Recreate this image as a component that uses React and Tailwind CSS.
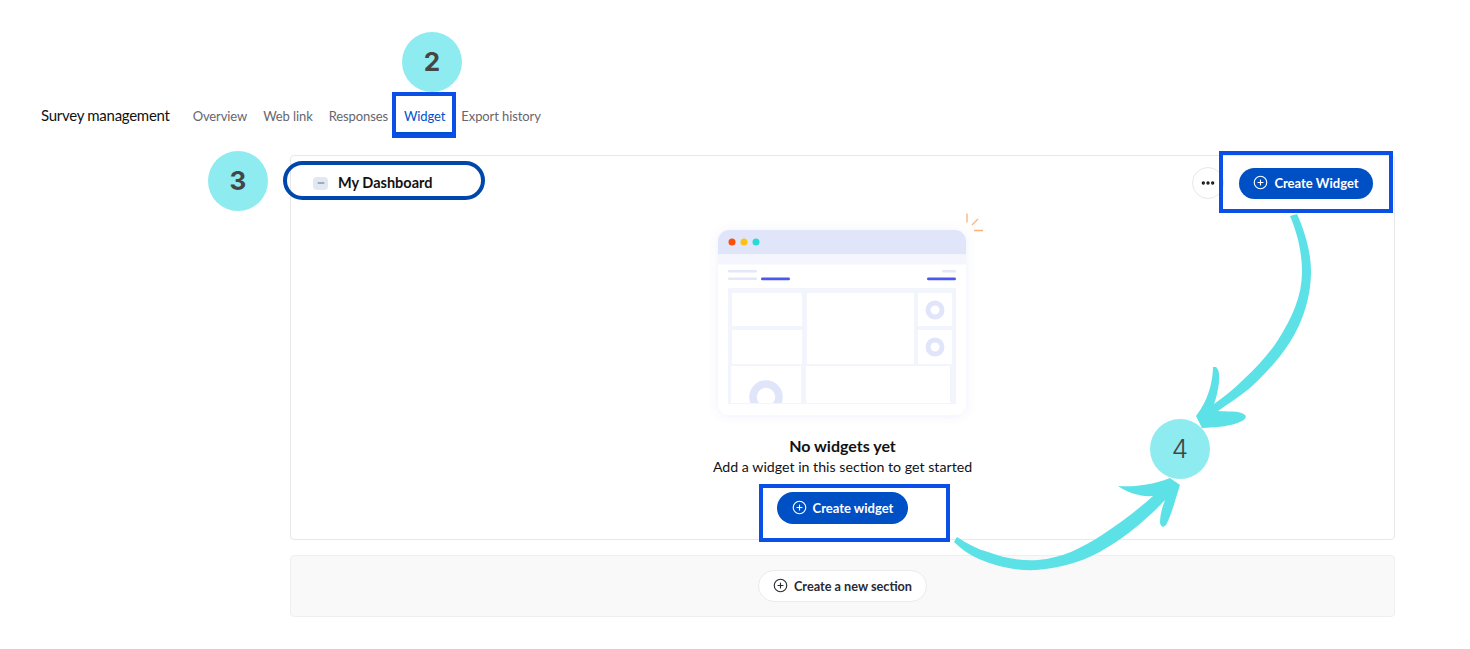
import React from "react";
import { CirclePlus, Ellipsis, Minus } from "lucide-react";

const tabs = ["Overview", "Web link", "Responses", "Widget", "Export history"];

function Illustration() {
  return (
    <svg width="310" height="230" viewBox="690 200 310 230" className="block">
      <defs>
        <filter id="sh" x="-20%" y="-20%" width="140%" height="140%">
          <feDropShadow dx="0" dy="1" stdDeviation="5" floodColor="#5b68d8" floodOpacity="0.1" />
        </filter>
        <clipPath id="win"><rect x="718" y="230" width="248" height="185" rx="11" /></clipPath>
      </defs>
      <rect x="718" y="230" width="248" height="185" rx="11" fill="#fff" filter="url(#sh)" />
      <g clipPath="url(#win)">
        <rect x="718" y="230" width="248" height="24.5" fill="#e0e5fa" />
        <rect x="718" y="254.5" width="248" height="10" fill="#f4f5fd" />
      </g>
      <circle cx="732" cy="242" r="3.5" fill="#fb4f0b" />
      <circle cx="744" cy="242" r="3.5" fill="#fec013" />
      <circle cx="756" cy="242" r="3.5" fill="#27dcd2" />
      <rect x="728" y="270" width="29" height="2.6" rx="1.3" fill="#e3e7fa" />
      <rect x="728" y="277.5" width="29" height="2.6" rx="1.3" fill="#e3e7fa" />
      <rect x="761" y="277.5" width="29" height="2.8" rx="1.4" fill="#4b57ef" />
      <rect x="942" y="270" width="14" height="2.6" rx="1.3" fill="#e3e7fa" />
      <rect x="927" y="277.5" width="29" height="2.8" rx="1.4" fill="#4b57ef" />
      <rect x="728" y="288" width="228" height="116" fill="#f3f5fd" />
      <rect x="732" y="293" width="70" height="33" fill="#fff" />
      <rect x="732" y="330" width="70" height="34" fill="#fff" />
      <rect x="807" y="293" width="107" height="71" fill="#fff" />
      <rect x="918" y="293" width="34" height="33" fill="#fff" />
      <rect x="918" y="330" width="34" height="34" fill="#fff" />
      <rect x="731" y="366" width="70" height="37" fill="#fff" />
      <rect x="806" y="366" width="144" height="37" fill="#fff" />
      <circle cx="935" cy="310" r="7" fill="none" stroke="#e0e5fa" strokeWidth="5" />
      <circle cx="935" cy="347" r="7" fill="none" stroke="#e0e5fa" strokeWidth="5" />
      <clipPath id="don"><rect x="731" y="366" width="70" height="37" /></clipPath>
      <circle cx="766" cy="397" r="13" fill="none" stroke="#e0e5fa" strokeWidth="7.5" clipPath="url(#don)" />
      <path d="M967 213.5v9M972 225l6-6M974 230.5h9" stroke="#f8b37b" strokeWidth="1.3" fill="none" />
    </svg>
  );
}

function Arrows() {
  return (
    <svg width="1470" height="649" viewBox="0 0 1470 649" className="absolute left-0 top-0 pointer-events-none">
      <path
        fill="#5ce1e6"
        d="M1290 216 L1297 214 C1305 232 1311 252 1311 272 C1311 296 1303 322 1290 342 C1278 361 1263 376 1250 388 C1240 396 1228 404 1218 411 C1226 412 1240 410 1245 415 C1247 417 1245 419 1242 421 C1230 427 1216 427 1202 428 L1196 416 C1203 407 1207 398 1210 388 C1212 380 1213 372 1213 367 L1216 367 C1220 371 1219 376 1219 382 C1218 391 1216 399 1214 404 C1224 397 1234 389 1243 380 C1257 367 1269 354 1278 340 C1292 318 1302 296 1302 272 C1302 252 1297 232 1290 216 Z"
      />
      <path
        fill="#5ce1e6"
        d="M954 542 L957 537 C968 544 977 549 988 552 C1004 558 1020 561 1038 560 C1062 558 1082 548 1102 535 C1122 522 1141 507 1153 496 C1141 497 1128 493 1118 486 C1130 487 1150 486 1170 478 L1180 485 C1176 497 1172 514 1166 525 C1163 528 1161 527 1160 523 C1160 515 1162 508 1165 500 C1150 516 1130 534 1108 547 C1086 561 1062 568 1036 570 C1015 571 995 566 979 559 C970 555 961 549 954 542 Z"
      />
    </svg>
  );
}

function Badge({ className, children }) {
  return (
    <div className={`absolute flex h-[60px] w-[60px] items-center justify-center rounded-full bg-[#8eebef] pb-[2px] font-['Inter',sans-serif] text-[#454545] ${className}`}>
      {children}
    </div>
  );
}

export default function App() {
  return (
    <div className="relative h-[649px] w-[1470px] overflow-hidden bg-white font-['Lato',sans-serif] text-[#121212]">
      <div className="flex items-center pl-[41px] pt-[104px]">
        <h1 className="text-[15px] leading-5 tracking-[-0.28px]">Survey management</h1>
        <nav className="ml-[23px] mt-[2px] flex gap-4 text-[13px] leading-5 tracking-[-0.1px] text-[#66666e]">
          {tabs.map((t) => (
            <span key={t} className={t === "Widget" ? "text-[#0052cc]" : ""}>{t}</span>
          ))}
        </nav>
      </div>

      <main className="ml-[290px] mt-[29px] w-[1105px]">
        <section className="flex h-[385px] flex-col rounded border border-[#e8e8ea]">
          <header className="flex h-[54px] shrink-0 items-center pl-[22px] pr-[21px]">
            <span className="flex h-[13px] w-[15px] items-center justify-center rounded-sm bg-[#e2e8f2] text-[#44546f]">
              <Minus size={10} strokeWidth={2} />
            </span>
            <h2 className="ml-[10px] -mt-[1px] text-[14.5px] font-bold leading-5 text-[#121212]">My Dashboard</h2>
            <button className="ml-auto flex h-8 w-8 items-center justify-center rounded-full border border-[#e8e8ea] bg-white text-[#121212]">
              <Ellipsis size={16} strokeWidth={3} />
            </button>
            <button className="ml-[15px] flex h-[31px] w-[134px] items-center justify-center gap-[6px] rounded-full bg-[#0050c5] text-[13px] font-bold text-white">
              <CirclePlus size={15} strokeWidth={1.8} className="-mt-[1px]" />
              <span className="pt-[1px]">Create Widget</span>
            </button>
          </header>
          <div className="flex flex-col items-center">
            <div className="-mt-[10px] ml-[4px]"><Illustration /></div>
            <p className="mt-[6px] text-[16px] font-bold leading-5">No widgets yet</p>
            <p className="mt-[1px] text-[14.2px] leading-5">Add a widget in this section to get started</p>
            <button className="mt-[15px] flex h-[32px] w-[131px] items-center justify-center gap-[6px] rounded-full bg-[#0050c5] text-[13px] font-bold text-white">
              <CirclePlus size={15} strokeWidth={1.8} className="-mt-[1px]" />
              <span className="pt-[1px]">Create widget</span>
            </button>
          </div>
        </section>
        <section className="mt-[15px] flex h-[62px] items-center justify-center rounded border border-[#efeff1] bg-[#f9f9f9]">
          <button className="flex h-[32px] w-[169px] items-center justify-center gap-[6px] rounded-full border border-[#ebebed] bg-white text-[12.7px] font-bold text-[#2a2a33]">
            <CirclePlus size={15} strokeWidth={1.8} className="-mt-[1px]" />
            <span className="pt-[1px]">Create a new section</span>
          </button>
        </section>
      </main>

      <Arrows />
      <div className="absolute left-[396px] top-[132px] h-[2px] w-[56px] bg-[#0052cc]" />
      <div className="absolute left-[392px] top-[92px] h-[46px] w-[64px] border-4 border-[#0a50e6]" />
      <div className="absolute left-[1219px] top-[151px] h-[62px] w-[174px] border-4 border-[#0a50e6]" />
      <div className="absolute left-[759px] top-[484px] h-[58px] w-[191px] border-4 border-[#0a50e6]" />
      <div className="absolute left-[283px] top-[161px] h-[39px] w-[202px] rounded-full border-4 border-[#0047ab]" />
      <Badge className="left-[402px] top-[32px] text-[26px] font-bold">2</Badge>
      <Badge className="left-[208px] top-[151px] text-[26px] font-bold">3</Badge>
      <Badge className="left-[1150px] top-[419px] text-[26px] font-light">4</Badge>
    </div>
  );
}
